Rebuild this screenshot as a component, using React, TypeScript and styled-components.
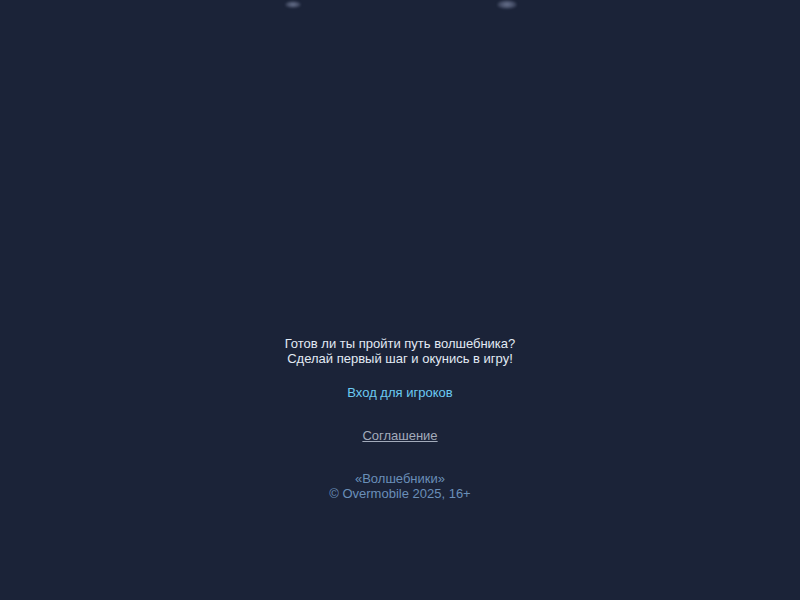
import React from "react";
import styled, { createGlobalStyle } from "styled-components";

const GlobalStyle = createGlobalStyle`
  html, body {
    margin: 0;
    padding: 0;
    background: #1b2338;
  }
  body {
    font-family: "Liberation Sans", Arial, sans-serif;
    font-size: 13px;
  }
`;

const Page = styled.div`
  min-height: 600px;
  display: flex;
  flex-direction: column;
  align-items: center;
  background: #1b2338;
`;

const Hero = styled.div`
  position: relative;
  width: 100%;
  height: 336px;
`;

const Glow = styled.div<{ $left: number; $w: number; $h: number; $top: number }>`
  position: absolute;
  top: ${(p) => p.$top}px;
  left: ${(p) => p.$left}px;
  width: ${(p) => p.$w}px;
  height: ${(p) => p.$h}px;
  border-radius: 50% 50% 40% 40%;
  background: radial-gradient(ellipse at center, rgba(140, 150, 180, 0.7) 0%, rgba(140, 150, 180, 0.35) 50%, rgba(140, 150, 180, 0) 80%);
  filter: blur(1px);
`;

const Content = styled.div`
  display: flex;
  flex-direction: column;
  align-items: center;
  text-align: center;
`;

const Intro = styled.p`
  margin: 0;
  color: #e2eaf4;
  line-height: 15px;
`;

const PlayLink = styled.a`
  margin-top: 19px;
  color: #6ccaf2;
  text-decoration: none;
  line-height: 15px;
`;

const Agreement = styled.a`
  margin-top: 28px;
  color: #a3abbb;
  text-decoration: underline;
  line-height: 15px;
`;

const Footer = styled.p`
  margin: 28px 0 0;
  color: #6a8fb8;
  line-height: 15px;
`;

export default function App() {
  return (
    <>
      <GlobalStyle />
      <Page>
        <Hero>
          <Glow $left={285} $w={16} $h={7} $top={1} />
          <Glow $left={497} $w={20} $h={9} $top={0} />
        </Hero>
        <Content>
          <Intro>
            Готов ли ты пройти путь волшебника?
            <br />
            Сделай первый шаг и окунись в игру!
          </Intro>
          <PlayLink href="#">Вход для игроков</PlayLink>
          <Agreement href="#">Соглашение</Agreement>
          <Footer>
            «Волшебники»
            <br />© Overmobile 2025, 16+
          </Footer>
        </Content>
      </Page>
    </>
  );
}
